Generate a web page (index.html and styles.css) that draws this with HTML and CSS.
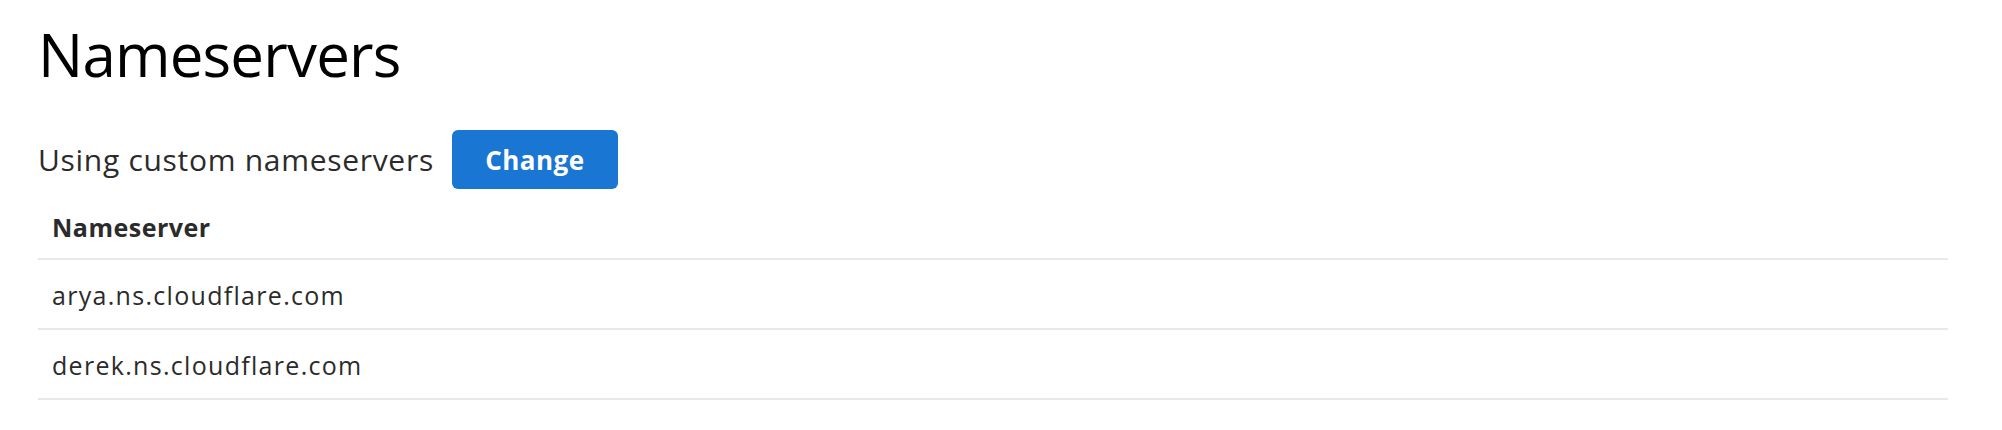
FILE: index.html
```html
<!DOCTYPE html>
<html lang="en">
<head>
<meta charset="utf-8">
<title>Nameservers</title>
<link rel="stylesheet" href="styles.css">
</head>
<body>
<main class="page">
  <h1 class="title">Nameservers</h1>
  <div class="status-row">
    <span class="status-text">Using custom nameservers</span>
    <button class="btn-primary" type="button">Change</button>
  </div>
  <table class="ns-table">
    <thead>
      <tr><th>Nameserver</th></tr>
    </thead>
    <tbody>
      <tr><td>arya.ns.cloudflare.com</td></tr>
      <tr><td>derek.ns.cloudflare.com</td></tr>
    </tbody>
  </table>
</main>
</body>
</html>
```

FILE: styles.css
```css
html, body {
  margin: 0;
  padding: 0;
  background: #ffffff;
}

body {
  font-family: "Open Sans", "Noto Sans", "Liberation Sans", sans-serif;
  color: #2b2b2b;
}

.page {
  width: 1910px;
  padding: 0 0 0 38px;
}

.title {
  margin: 18px 0 0 0;
  font-size: 60px;
  line-height: 72px;
  font-weight: 400;
  color: #000000;
  letter-spacing: -0.8px;
}

.status-row {
  display: flex;
  align-items: center;
  gap: 18px;
  margin-top: 40px;
}

.status-text {
  font-size: 30px;
  line-height: 40px;
  color: #2b2b2b;
  letter-spacing: 0.7px;
}

.btn-primary {
  width: 166px;
  height: 59px;
  border: none;
  border-radius: 6px;
  background: #1976d2;
  color: #ffffff;
  font-family: inherit;
  font-size: 26px;
  font-weight: 700;
  letter-spacing: 0.5px;
  padding: 0;
}

.ns-table {
  width: 100%;
  border-collapse: collapse;
  margin-top: 20px;
}

.ns-table th,
.ns-table td {
  text-align: left;
  padding: 17px 14px 15px 14px;
  font-size: 25px;
  line-height: 36px;
  border-bottom: 2px solid #e8e8e8;
}

.ns-table th {
  font-weight: 700;
  padding-top: 0;
  padding-bottom: 13px;
  letter-spacing: 0.5px;
}

.ns-table td {
  font-weight: 400;
  letter-spacing: 1.3px;
}
```
